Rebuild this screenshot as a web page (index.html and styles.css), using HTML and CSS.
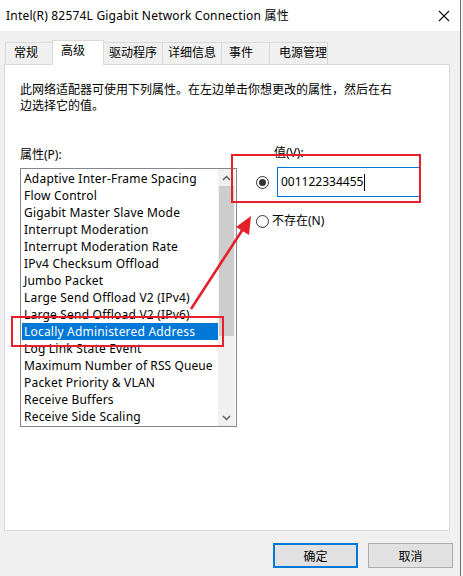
FILE: index.html
```html
<!DOCTYPE html>
<html lang="zh-CN">
<head>
<meta charset="utf-8">
<title>属性</title>
<link rel="stylesheet" href="styles.css">
</head>
<body>
<div class="screen">
  <div class="window">
    <div class="titlebar">
      <span class="title">Intel(R) 82574L Gigabit Network Connection 属性</span>
      <svg class="close" width="12" height="12" viewBox="0 0 12 12"><path d="M1 1 L11 11 M11 1 L1 11" stroke="#111" stroke-width="1.1" fill="none"/></svg>
    </div>
    <div class="tabs">
      <div class="tab t1">常规</div>
      <div class="tab t2 active">高级</div>
      <div class="tab t3">驱动程序</div>
      <div class="tab t4">详细信息</div>
      <div class="tab t5">事件</div>
      <div class="tab t6">电源管理</div>
    </div>
    <div class="panel">
      <p class="desc">此网络适配器可使用下列属性。在左边单击你想更改的属性，然后在右<br>边选择它的值。</p>
      <div class="cols">
        <div class="leftcol">
          <div class="label left-label">属性(P):</div>
          <div class="listbox">
            <ul class="items">
              <li>Adaptive Inter-Frame Spacing</li>
              <li>Flow Control</li>
              <li>Gigabit Master Slave Mode</li>
              <li>Interrupt Moderation</li>
              <li>Interrupt Moderation Rate</li>
              <li>IPv4 Checksum Offload</li>
              <li>Jumbo Packet</li>
              <li>Large Send Offload V2 (IPv4)</li>
              <li>Large Send Offload V2 (IPv6)</li>
              <li class="selected">Locally Administered Address</li>
              <li>Log Link State Event</li>
              <li class="tight">Maximum Number of RSS Queue</li>
              <li>Packet Priority &amp; VLAN</li>
              <li>Receive Buffers</li>
              <li>Receive Side Scaling</li>
            </ul>
            <div class="scrollbar">
              <div class="sb-btn"><svg width="9" height="6" viewBox="0 0 9 6"><path d="M1 5 L4.5 1.5 L8 5" stroke="#606060" stroke-width="1.5" fill="none"/></svg></div>
              <div class="sb-thumb"></div>
              <div class="sb-track"></div>
              <div class="sb-btn"><svg width="9" height="6" viewBox="0 0 9 6"><path d="M1 1 L4.5 4.5 L8 1" stroke="#606060" stroke-width="1.5" fill="none"/></svg></div>
            </div>
          </div>
        </div>
        <div class="rightcol">
          <div class="label right-label">值(V):</div>
          <div class="row value-row">
            <span class="radio checked"></span>
            <div class="textbox"><span class="value">001122334455</span><span class="caret"></span></div>
          </div>
          <div class="row none-row">
            <span class="radio"></span>
            <span class="none-label">不存在(N)</span>
          </div>
        </div>
      </div>
    </div>
    <div class="buttons">
      <button class="btn default">确定</button>
      <button class="btn">取消</button>
    </div>
  </div>
  <div class="backdrop"></div>
  <svg class="annot" width="463" height="576" viewBox="0 0 463 576">
    <rect x="232" y="155" width="188" height="47" fill="none" stroke="#e5202a" stroke-width="2"/>
    <rect x="12" y="317" width="211" height="29" fill="none" stroke="#e5202a" stroke-width="2"/>
    <path d="M191 309 L243 229" stroke="#e5202a" stroke-width="2.6" fill="none"/>
    <path d="M251 216 L249 235 L236 227 Z" fill="#e5202a"/>
  </svg>
</div>
</body>
</html>
```

FILE: styles.css
```css
* { box-sizing: border-box; }
html, body { margin: 0; padding: 0; }
body {
  width: 463px;
  height: 576px;
  overflow: hidden;
  font-family: "Noto Sans", "Noto Sans CJK SC", sans-serif;
  font-size: 12px;
  color: #000;
  background: #e9e9e9;
}
.screen {
  position: relative;
  display: flex;
  width: 463px;
  height: 576px;
}
.window {
  width: 461px;
  height: 576px;
  background: #f0f0f0;
  border-right: 1px solid #6e6e6e;
  display: flex;
  flex-direction: column;
}
.backdrop {
  width: 2px;
  background: #f3f3f3;
}
.titlebar {
  height: 31px;
  background: #fff;
  display: flex;
  align-items: center;
  justify-content: space-between;
  padding: 0 10px 0 6px;
}
.title {
  font-size: 12px;
  line-height: 16px;
  padding-top: 1px;
  letter-spacing: 0.2px;
}
.close { display: block; }

.tabs {
  display: flex;
  align-items: flex-end;
  height: 33px;
  padding: 9px 0 0 5px;
}
.tab {
  height: 22px;
  border: 1px solid #d9d9d9;
  border-bottom: none;
  margin-right: -1px;
  background: #f0f0f0;
  padding-left: 8px;
  line-height: 20px;
  font-size: 12px;
}
.tab.t1 { width: 48px; }
.tab.t2 { width: 52px; }
.tab.t3 { width: 60px; padding-left: 5px; }
.tab.t4 { width: 60px; padding-left: 5px; }
.tab.t5 { width: 49px; padding-left: 7px; }
.tab.t6 { width: 59px; padding-left: 9px; }
.tab.active {
  height: 25px;
  background: #fff;
  margin-bottom: -1px;
  position: relative;
  z-index: 1;
  line-height: 20px;
}

.panel {
  margin: 0 10px 0 4px;
  height: 467px;
  background: #fff;
  border: 1px solid #d9d9d9;
  padding: 17px 14px 0 15px;
}
.desc {
  margin: 0;
  line-height: 16px;
  font-size: 12px;
}
.cols {
  display: flex;
  margin-top: 31px;
}
.label { line-height: 16px; }
.left-label { padding-top: 2px; margin-bottom: 5px; }
.right-label { margin-bottom: 6px; padding-left: 18px; }

.listbox {
  width: 217px;
  height: 259px;
  border: 1px solid #828790;
  display: flex;
}
.items {
  list-style: none;
  margin: 0;
  padding: 1px 0 0 1px;
  width: 197px;
  overflow: hidden;
}
.items li {
  height: 17px;
  line-height: 17px;
  padding-left: 2px;
  white-space: nowrap;
  overflow: hidden;
  letter-spacing: 0.2px;
}
.items li.tight { letter-spacing: 0.1px; }
.items li.selected {
  background: #0078d7;
  color: #fff;
}
.scrollbar {
  width: 17px;
  background: #f0f0f0;
  display: flex;
  flex-direction: column;
}
.sb-btn {
  height: 17px;
  display: flex;
  align-items: center;
  justify-content: center;
}
.sb-thumb {
  height: 150px;
  margin: 0 1px;
  background: #cdcdcd;
}
.sb-track { flex: 1; }

.rightcol {
  margin-left: 19px;
}
.row {
  display: flex;
  align-items: center;
}
.value-row { height: 30px; }
.radio {
  width: 13px;
  height: 13px;
  border: 1px solid #333;
  border-radius: 50%;
  background: #fff;
  display: flex;
  align-items: center;
  justify-content: center;
  flex: none;
}
.radio.checked::after {
  content: "";
  width: 7px;
  height: 7px;
  border-radius: 50%;
  background: #333;
}
.textbox {
  margin-left: 8px;
  width: 143px;
  height: 30px;
  border: 1px solid #0078d7;
  display: flex;
  align-items: center;
  padding-left: 3px;
}
.value { line-height: 16px; }
.caret {
  width: 0;
  height: 17px;
  border-left: 1px solid #000;
  margin-left: 1px;
}
.none-row {
  margin-top: 17px;
  height: 14px;
}
.none-label {
  margin-left: 3px;
  line-height: 16px;
}

.buttons {
  display: flex;
  justify-content: flex-end;
  gap: 10px;
  padding: 12px 7px 0 0;
}
.btn {
  width: 85px;
  height: 25px;
  border: 1px solid #adadad;
  background: #e1e1e1;
  font-family: "Noto Sans", "Noto Sans CJK SC", sans-serif;
  font-size: 12px;
  color: #000;
  padding: 0;
}
.btn.default {
  border: 2px solid #0078d7;
}
.annot {
  position: absolute;
  left: 0;
  top: 0;
  pointer-events: none;
}
```
